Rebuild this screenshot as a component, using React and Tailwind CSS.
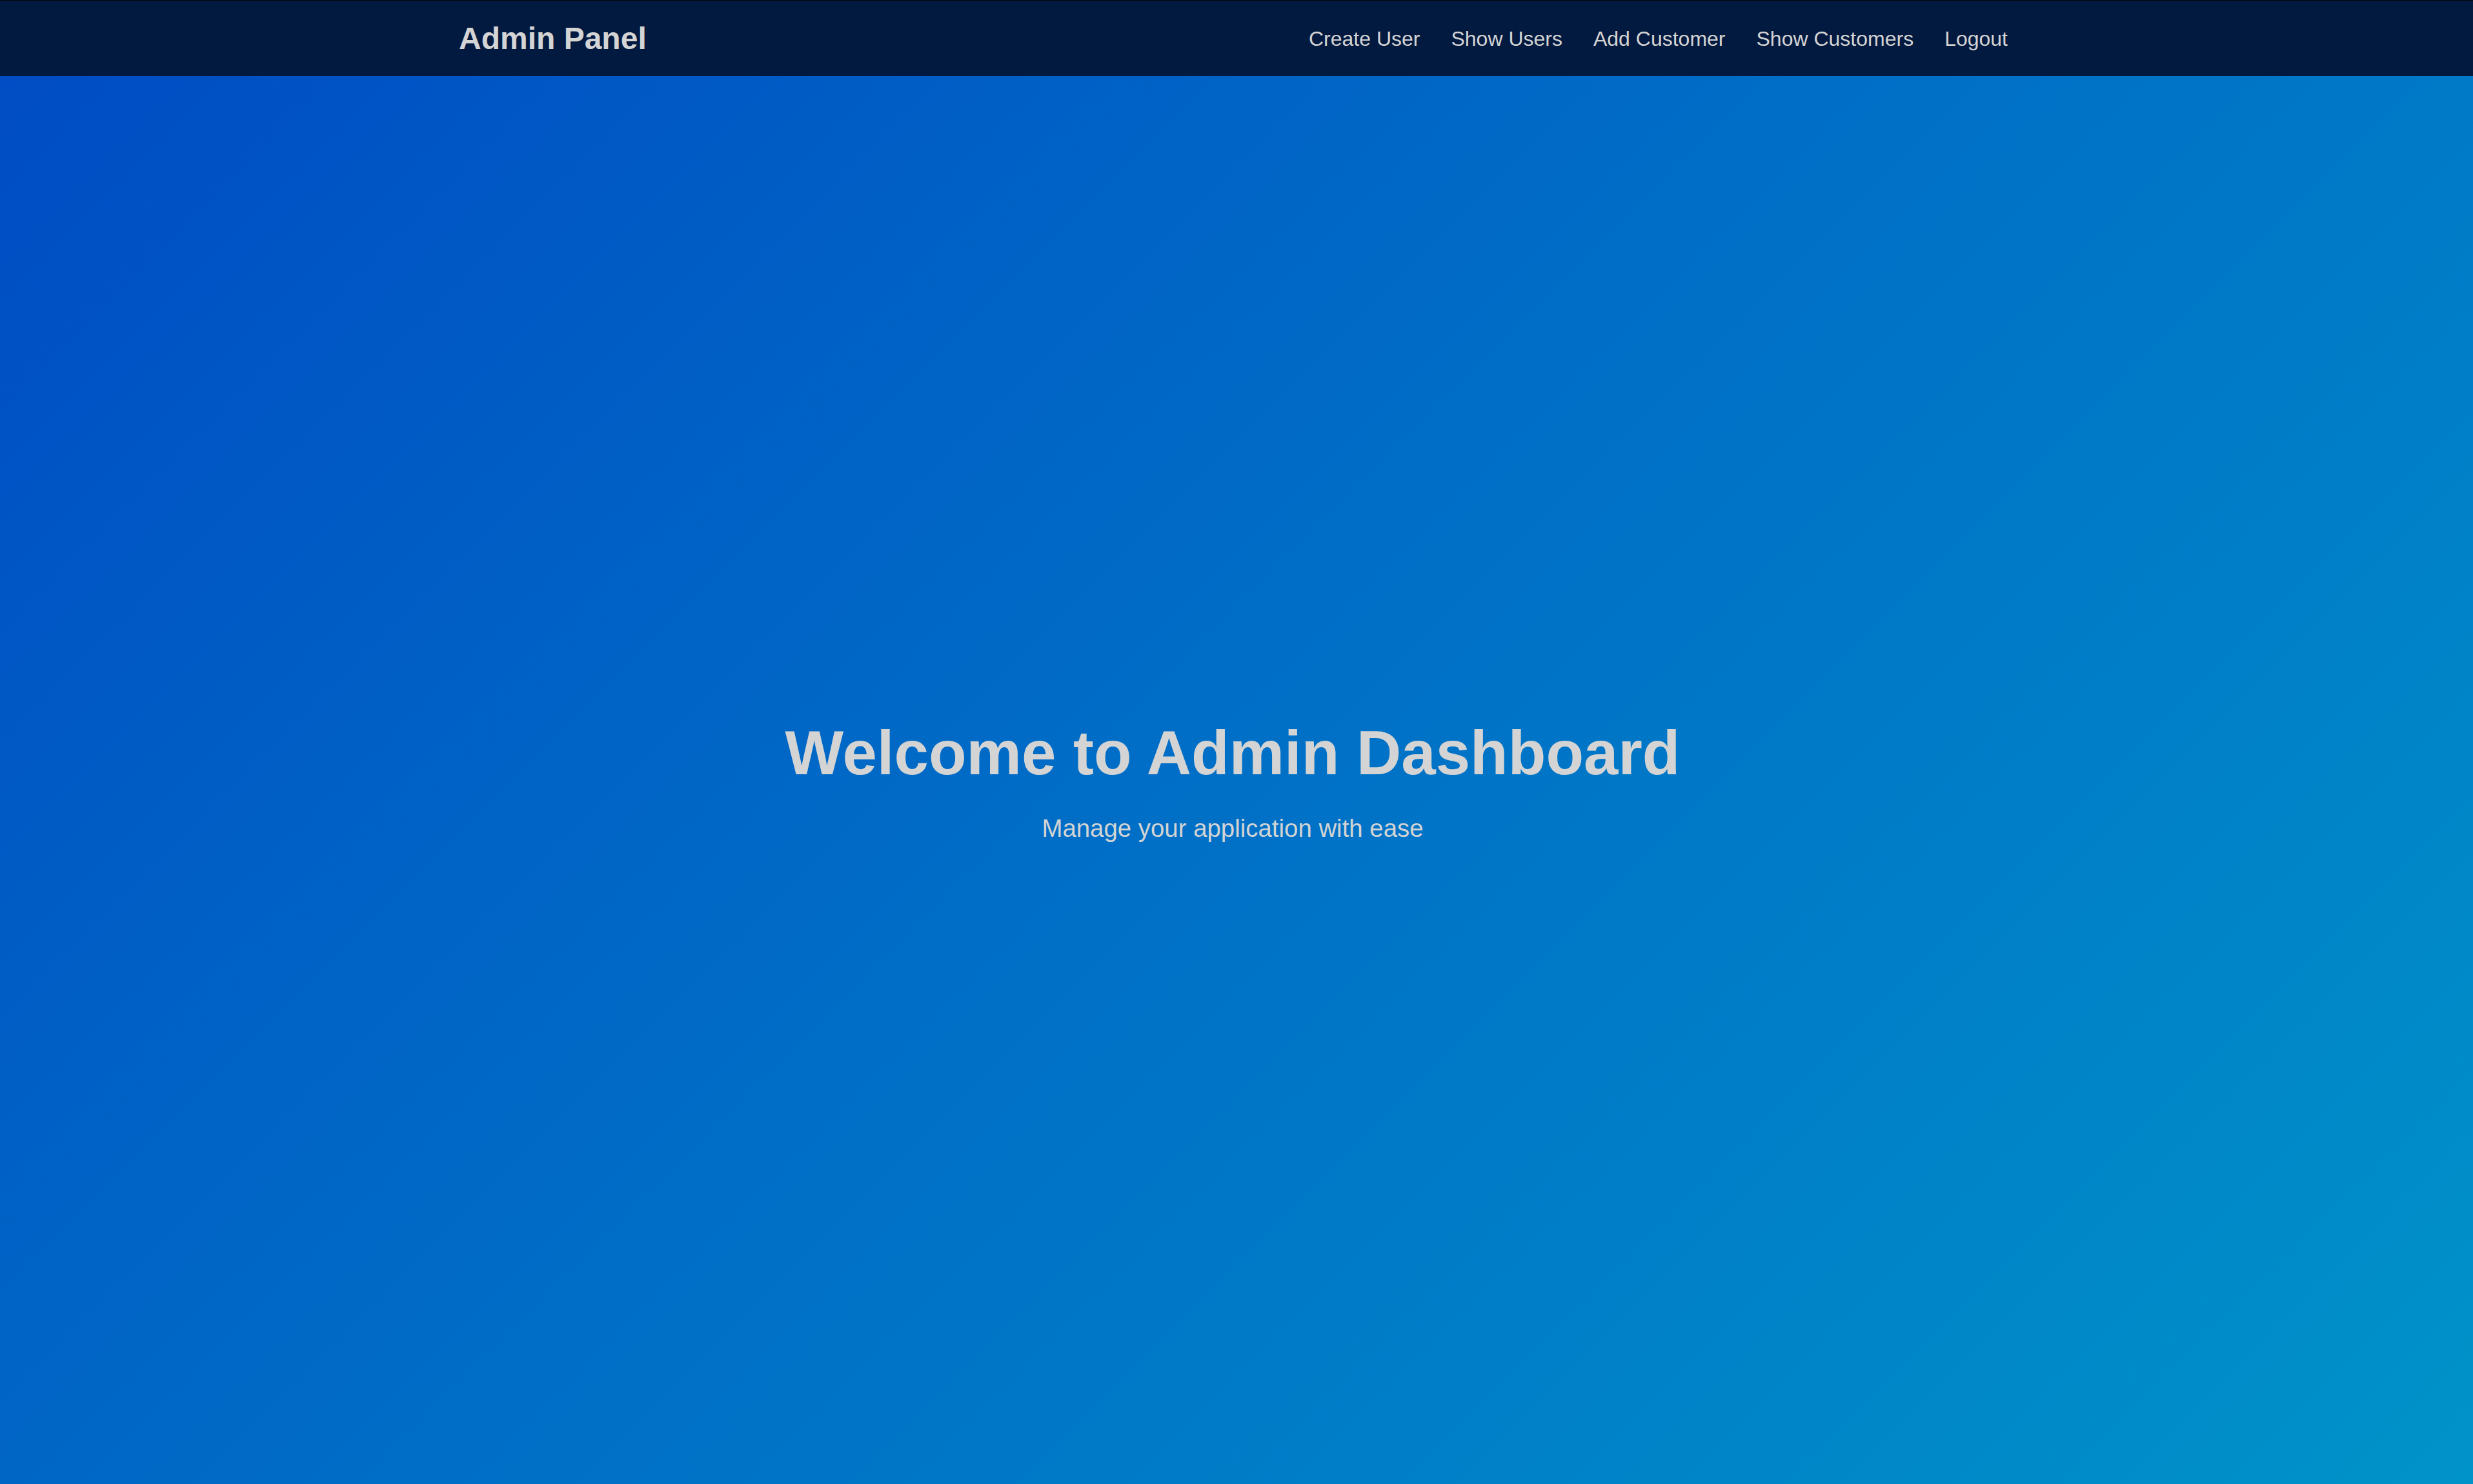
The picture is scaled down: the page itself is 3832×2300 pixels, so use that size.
export default function App() {
  const links = ["Create User", "Show Users", "Add Customer", "Show Customers", "Logout"];
  return (
    <div
      className="flex h-[2300px] w-full flex-col bg-[linear-gradient(135deg,#004bc4,#0093c9)] text-[#d4d4d4]"
      style={{ fontFamily: '"Liberation Sans", Arial, sans-serif' }}
    >
      <nav className="h-[118px] shrink-0 border-t-2 border-[#020a1b] bg-[#031a40] pr-[10px]">
        <div className="mx-auto flex h-full max-w-[2400px] items-center justify-between">
          <div className="text-[48px] font-bold leading-none">Admin Panel</div>
          <ul className="flex items-center gap-[48px] text-[32px] leading-none">
            {links.map((l) => (
              <li key={l}>
                <a href="#" className="text-[#d4d4d4]">{l}</a>
              </li>
            ))}
          </ul>
        </div>
      </nav>
      <main className="flex flex-1 flex-col items-center justify-center pr-[12px]">
        <h1 className="mb-[40px] text-[96px] font-bold leading-[110px]">Welcome to Admin Dashboard</h1>
        <p className="text-[38.4px] leading-[44px]">Manage your application with ease</p>
      </main>
    </div>
  );
}
